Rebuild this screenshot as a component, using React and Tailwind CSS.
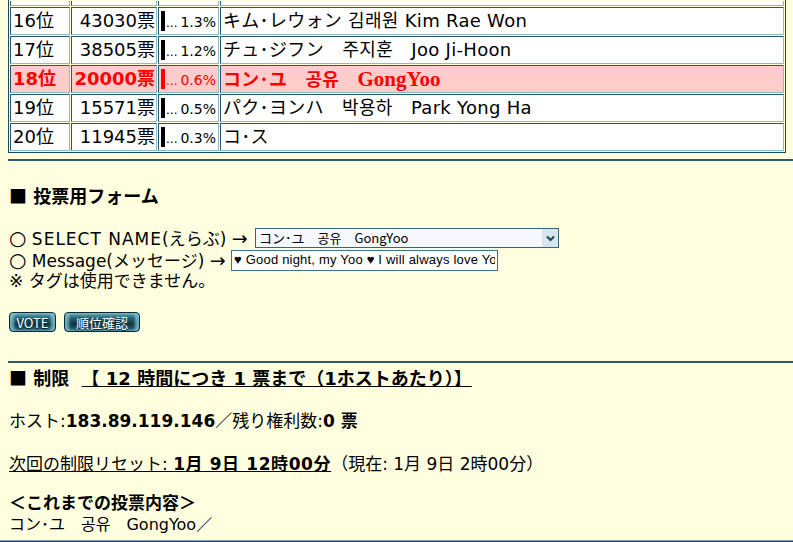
import React from 'react';

const rows = [
  { rank: '16位', votes: '43030票', pct: '1.3%', name: 'キム･レウォン 김래원 Kim Rae Won' },
  { rank: '17位', votes: '38505票', pct: '1.2%', name: 'チュ･ジフン　주지훈　Joo Ji-Hoon' },
  { rank: '18位', votes: '20000票', pct: '0.6%', name: 'コン･ユ　공유　', latin: 'GongYoo', hl: true },
  { rank: '19位', votes: '15571票', pct: '0.5%', name: 'パク･ヨンハ　박용하　Park Yong Ha' },
  { rank: '20位', votes: '11945票', pct: '0.3%', name: 'コ･ス' },
];

const cell =
  'border border-t-[#2a5868] border-l-[#2a5868] border-b-[#8cbccc] border-r-[#8cbccc] p-0 align-middle';

const cjk = "font-['Noto_Sans_CJK_JP',sans-serif]";

const RankTable = () => (
  <table className="w-[778px] ml-2 table-fixed border-separate border-spacing-[1px] border border-t-0 border-[#1d4a58] text-[18px] leading-[22px]">
    <tbody>
      {/* tail of the row above, scrolled out of view */}
      <tr>
        <td className={`${cell} w-[60px] h-[5px] border-t-0 bg-white`} />
        <td className={`${cell} w-[86px] h-[5px] border-t-0 bg-white`} />
        <td className={`${cell} w-[61px] h-[5px] border-t-0 bg-white`} />
        <td className={`${cell} h-[5px] border-t-0 bg-white`} />
      </tr>
      {rows.map((r) => {
        const bg = r.hl ? 'bg-[#ffcccc] text-[#ff0000]' : 'bg-white';
        const weight = r.hl ? 'font-bold' : '';
        return (
          <tr key={r.rank}>
            <td className={`${cell} ${bg} ${weight} h-[28px] pl-[2px] whitespace-nowrap`}>{r.rank}</td>
            <td className={`${cell} ${bg} ${weight} h-[28px] pr-[1px] text-right whitespace-nowrap`}>{r.votes}</td>
            <td className={`${cell} ${bg} h-[28px] pl-[2px] pr-[2px]`}>
              <div className="flex items-end">
                <span className={`w-[4px] h-[20px] ${r.hl ? 'bg-[#ff0000]' : 'bg-black'}`} />
                <span className="text-[12px] leading-[16px] ml-[1px]">...</span>
                <span className="ml-auto text-[14px] leading-[18px]">{r.pct}</span>
              </div>
            </td>
            <td className={`${cell} ${bg} ${weight} h-[28px] pl-[2px] whitespace-pre tracking-[0.3px]`}>
              {r.name}
              {r.latin && (
                <span className="font-['Liberation_Serif',serif] text-[21px] tracking-normal">{r.latin}</span>
              )}
            </td>
          </tr>
        );
      })}
    </tbody>
  </table>
);

const Rule = ({ className }) => <div className={`ml-2 h-[2px] bg-[#2a5a68] ${className}`} />;

const FakeSelect = () => (
  <div className="w-[304px] h-[20px] border border-[#3a6474] bg-[#f7f7ff] flex items-stretch">
    <span className={`flex-1 text-[13px] leading-[18px] pl-[3px] whitespace-pre ${cjk}`}>
      コン･ユ　공유　GongYoo
    </span>
    <span className="w-[16px] bg-[#d6e6ee] flex items-center justify-center">
      <svg width="9" height="7" viewBox="0 0 9 7">
        <path d="M1 1.5 L4.5 5 L8 1.5" fill="none" stroke="#1d4a58" strokeWidth="2.2" />
      </svg>
    </span>
  </div>
);

const SkinButton = ({ children, w }) => (
  <button
    className={`${w} h-[20px] rounded-[4px] border border-[#0a2a34] bg-[linear-gradient(to_bottom,#6aa6b4,#21606f_30%,#0d3642_62%,#2c6a7a)] text-white text-[13px] leading-[17px] shadow-[inset_4px_0_3px_rgba(140,205,220,0.75),inset_-4px_0_3px_rgba(140,205,220,0.75)] [text-shadow:0_1px_1px_#052028] ${cjk}`}
  >
    {children}
  </button>
);

export default function App() {
  return (
    <div className="w-[793px] h-[542px] overflow-hidden bg-[#ffffe0] text-black font-['DejaVu_Sans','Noto_Sans_CJK_JP',sans-serif]">
      <RankTable />
      <Rule className="mt-[6px]" />

      <div className="pl-[9px] text-[17px] leading-[22px]">
        <div className="mt-[23px] font-bold text-[18px]">
          <span className={cjk}>■</span> 投票用フォーム
        </div>

        <div className="mt-[19px] h-[22px] flex items-center whitespace-pre">
          <span>
            <span className="text-[20px]">○</span> <span className="tracking-[1px]">SELECT NAME</span>(えらぶ){' '}
            <span className="text-[19px]">→</span>{' '}
          </span>
          <span className="ml-[2px]">
            <FakeSelect />
          </span>
        </div>
        <div className="h-[22px] flex items-center whitespace-pre">
          <span>
            <span className="text-[20px]">○</span> Message(メッセージ) <span className="text-[19px]">→</span>{' '}
          </span>
          <input
            readOnly
            value="♥ Good night, my Yoo ♥ I will always love Yoo"
            className="w-[267px] h-[21px] border border-[#46707e] bg-white px-[2px] text-[13px] tracking-[0.2px] font-['Liberation_Sans',sans-serif] outline-none"
          />
        </div>
        <div className="h-[21px] leading-[21px]">※ タグは使用できません。</div>

        <div className="mt-[20px] flex gap-[8px]">
          <SkinButton w="w-[47px]">VOTE</SkinButton>
          <SkinButton w="w-[76px]">順位確認</SkinButton>
        </div>
      </div>

      <Rule className="mt-[29px]" />

      <div className="pl-[9px] text-[17px] leading-[21px]">
        <div className="mt-[4px] font-bold whitespace-pre text-[18px]">
          <span className={cjk}>■</span> 制限{' '}
          <span className="ml-[6px] underline">【 12 時間につき 1 票まで（1ホストあたり）】</span>
        </div>
        <div className="mt-[22px]">
          ホスト:<b>183.89.119.146</b>／残り権利数:<b>0 票</b>
        </div>
        <div className="mt-[22px]">
          <span className="underline">
            次回の制限リセット: <b className="tracking-[0.6px]">1月 9日 12時00分</b>
          </span>
          （現在: 1月 9日 2時00分）
        </div>
        <div className="mt-[18px] font-bold">＜これまでの投票内容＞</div>
        <div className="whitespace-pre text-[16px]">コン･ユ　공유　GongYoo／</div>
      </div>

      <div className="mt-[5px] h-[4px] border-t border-[#7aa6b6] bg-[#1d4a58]" />
    </div>
  );
}
